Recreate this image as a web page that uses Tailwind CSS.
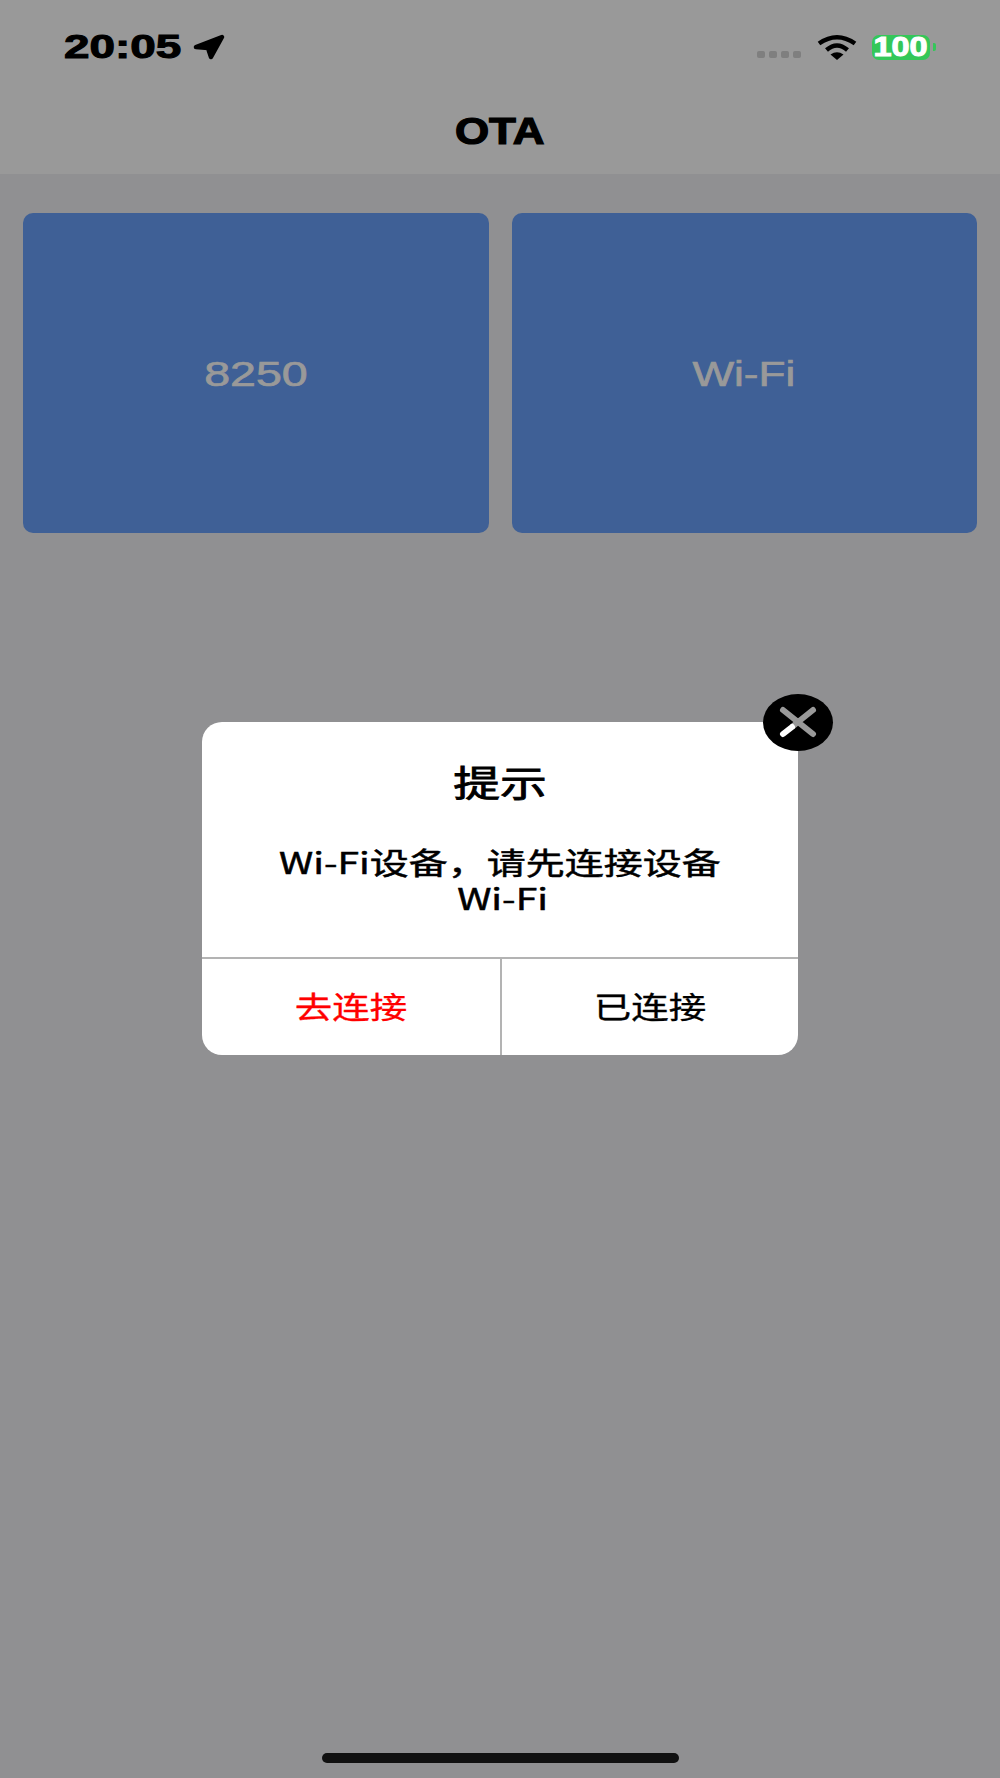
<!DOCTYPE html>
<html lang="zh-CN">
<head>
    <meta charset="UTF-8">
    <meta name="viewport" content="width=device-width, initial-scale=1.0">
    <title>OTA</title>
    <script src="https://cdn.jsdelivr.net/npm/@tailwindcss/browser@4"></script>
</head>
<body class="relative h-[1778px] w-[1000px] overflow-hidden bg-[#909092] font-['Liberation_Sans','Noto_Sans_CJK_SC',sans-serif]">

    <!-- status bar + nav -->
    <header class="h-[174px] bg-[#999999]">
        <div class="flex h-[92px] items-start justify-between pl-[64px] pr-[64px] pt-[34px]">
            <div class="flex items-center gap-[13px]">
                <span class="inline-block w-[116px] origin-left scale-x-[1.39] text-[33px] font-bold leading-[26px] text-black [-webkit-text-stroke:1px_black]">20:05</span>
                <svg class="h-[26px] w-[32px]" viewBox="0 0 32 26">
                    <path d="M3 13 L29 3 L18 23 L15 14 Z" fill="#000" stroke="#000" stroke-width="4.5" stroke-linejoin="round"/>
                </svg>
            </div>
            <div class="flex items-center">
                <div class="mr-[16px] mt-[15px] flex gap-[4px]">
                    <span class="h-[7px] w-[8px] rounded-[2px] bg-[#7f7f7f]"></span>
                    <span class="h-[7px] w-[8px] rounded-[2px] bg-[#7f7f7f]"></span>
                    <span class="h-[7px] w-[8px] rounded-[2px] bg-[#7f7f7f]"></span>
                    <span class="h-[7px] w-[8px] rounded-[2px] bg-[#7f7f7f]"></span>
                </div>
                <svg class="mr-[15px] h-[26px] w-[40px]" viewBox="0 0 40 26">
                    <path d="M2 9.5 Q20 -3 38 9.5" fill="none" stroke="#000" stroke-width="4.5"/>
                    <path d="M9.5 16 Q20 7 30.5 16" fill="none" stroke="#000" stroke-width="4.5"/>
                    <path d="M13.5 20.5 Q20 16 26.5 20.5 L20 26 Z" fill="#000"/>
                </svg>
                <div class="flex items-center">
                    <div class="flex h-[25px] w-[58px] items-center justify-center rounded-[7px] bg-[#34c759]">
                        <span class="inline-block scale-x-[1.2] text-[27px] font-bold leading-none text-white [-webkit-text-stroke:1px_white]">100</span>
                    </div>
                    <span class="ml-[3px] h-[8px] w-[3px] rounded-r-[2px] bg-[#34c759]"></span>
                </div>
            </div>
        </div>
        <div class="mt-[20px] flex justify-center">
            <h1 class="scale-x-[1.22] text-[36px] font-bold leading-[40px] text-black [-webkit-text-stroke:1.2px_black]">OTA</h1>
        </div>
    </header>

    <!-- device cards -->
    <main class="grid grid-cols-2 gap-[23px] pl-[23px] pr-[23px] pt-[39px]">
        <div class="flex h-[320px] items-center justify-center rounded-[10px] bg-[#3f6096]">
            <span class="inline-block scale-x-[1.33] text-[35px] leading-none text-[#999999] [-webkit-text-stroke:0.7px_#999999]">8250</span>
        </div>
        <div class="flex h-[320px] items-center justify-center rounded-[10px] bg-[#3f6096]">
            <span class="inline-block scale-x-[1.26] text-[35px] leading-none text-[#999999] [-webkit-text-stroke:0.7px_#999999]">Wi-Fi</span>
        </div>
    </main>

    <!-- dialog -->
    <div class="absolute inset-0 flex items-center justify-center">
        <div class="relative mb-[2px] flex h-[333px] w-[596px] flex-col rounded-[20px] bg-white">
            <button class="absolute -right-[35px] -top-[28px] flex h-[57px] w-[70px] items-center justify-center rounded-[50%] bg-black">
                <svg class="h-[34px] w-[40px]" viewBox="0 0 40 34">
                    <path d="M5 5 L35 29 M35 5 L20 17" stroke="#999" stroke-width="6" stroke-linecap="round"/>
                    <path d="M20 17 L14 22" stroke="#999" stroke-width="6"/>
                    <path d="M14 22 L5 29" stroke="#fff" stroke-width="6" stroke-linecap="round"/>
                </svg>
            </button>
            <div class="flex flex-1 flex-col items-center">
                <h2 class="mt-[41px] scale-x-[1.3] text-[36px] leading-[44px] text-black [-webkit-text-stroke:0.8px_black]">提示</h2>
                <p class="mt-[36px] flex flex-col items-center font-['Noto_Sans_CJK_SC',sans-serif] text-[30px] leading-[36px] text-black [-webkit-text-stroke:0.5px_black] scale-x-[1.3]">
                    <span>Wi-Fi设备，请先连接设备</span>
                    <span class="pl-[4px]">Wi-Fi</span>
                </p>
            </div>
            <div class="flex h-[98px] border-t-2 border-[#b3b3b3]">
                <div class="flex w-[300px] items-center justify-center border-r-2 border-[#b3b3b3] pt-[2px]">
                    <span class="inline-block scale-x-[1.25] text-[30px] leading-none text-[#ff0000] [-webkit-text-stroke:0.3px_#ff0000]">去连接</span>
                </div>
                <div class="flex flex-1 items-center justify-center pt-[2px]">
                    <span class="inline-block scale-x-[1.25] text-[30px] leading-none text-black [-webkit-text-stroke:0.3px_black]">已连接</span>
                </div>
            </div>
        </div>
    </div>

    <!-- home indicator -->
    <div class="absolute bottom-[15px] left-[322px] h-[10px] w-[357px] rounded-full bg-[#111111]"></div>

</body>
</html>
